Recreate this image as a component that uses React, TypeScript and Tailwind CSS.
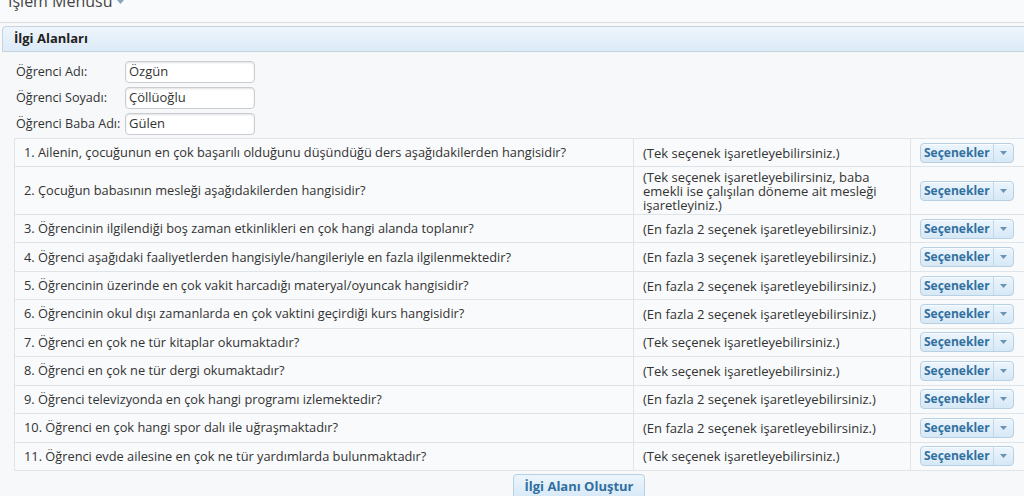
import React from "react";

const rows: { q: string; n: string[] }[] = [
  { q: "1. Ailenin, çocuğunun en çok başarılı olduğunu düşündüğü ders aşağıdakilerden hangisidir?", n: ["(Tek seçenek işaretleyebilirsiniz.)"] },
  { q: "2. Çocuğun babasının mesleği aşağıdakilerden hangisidir?", n: ["(Tek seçenek işaretleyebilirsiniz, baba", "emekli ise çalışılan döneme ait mesleği", "işaretleyiniz.)"] },
  { q: "3. Öğrencinin ilgilendiği boş zaman etkinlikleri en çok hangi alanda toplanır?", n: ["(En fazla 2 seçenek işaretleyebilirsiniz.)"] },
  { q: "4. Öğrenci aşağıdaki faaliyetlerden hangisiyle/hangileriyle en fazla ilgilenmektedir?", n: ["(En fazla 3 seçenek işaretleyebilirsiniz.)"] },
  { q: "5. Öğrencinin üzerinde en çok vakit harcadığı materyal/oyuncak hangisidir?", n: ["(En fazla 2 seçenek işaretleyebilirsiniz.)"] },
  { q: "6. Öğrencinin okul dışı zamanlarda en çok vaktini geçirdiği kurs hangisidir?", n: ["(En fazla 2 seçenek işaretleyebilirsiniz.)"] },
  { q: "7. Öğrenci en çok ne tür kitaplar okumaktadır?", n: ["(Tek seçenek işaretleyebilirsiniz.)"] },
  { q: "8. Öğrenci en çok ne tür dergi okumaktadır?", n: ["(Tek seçenek işaretleyebilirsiniz.)"] },
  { q: "9. Öğrenci televizyonda en çok hangi programı izlemektedir?", n: ["(En fazla 2 seçenek işaretleyebilirsiniz.)"] },
  { q: "10. Öğrenci en çok hangi spor dalı ile uğraşmaktadır?", n: ["(En fazla 2 seçenek işaretleyebilirsiniz.)"] },
  { q: "11. Öğrenci evde ailesine en çok ne tür yardımlarda bulunmaktadır?", n: ["(Tek seçenek işaretleyebilirsiniz.)"] },
];

function OptButton() {
  return (
    <div className="flex h-[20px] rounded-[4px] border border-[#b7d0e3] bg-gradient-to-b from-[#edf5fc] to-[#d6e8f6] text-[12px] font-bold text-[#30709f] shadow-[inset_0_1px_0_rgba(255,255,255,0.7)]">
      <div className="flex items-center px-[3px] leading-none">Seçenekler</div>
      <div className="flex w-[20px] items-center justify-center border-l border-[#c3d8e8]">
        <svg width="7" height="4" viewBox="0 0 7 4"><path d="M0 0h7L3.5 4z" fill="#6a94b6" /></svg>
      </div>
    </div>
  );
}

function Field({ label, value }: { label: string; value: string }) {
  return (
    <div className="flex h-[22px] items-center">
      <div className="w-[109px] text-[12.6px] text-[#333]">{label}</div>
      <div className="flex h-[22px] w-[130px] items-center rounded-[4px] border border-[#c9cdd1] bg-white px-[3px] text-[13px] text-[#333] shadow-[inset_0_1px_2px_rgba(0,0,0,0.12)]">
        {value}
      </div>
    </div>
  );
}

export default function App() {
  return (
    <div className="h-[496px] w-[1024px] overflow-hidden bg-[#f6f8fa]" style={{ fontFamily: '"Open Sans", "Noto Sans", sans-serif' }}>
      <div className="w-[1060px]">
        <div className="flex h-[23px] items-start border-b border-[#dadfe3] bg-[#f9fafb]">
          <div className="mt-[-10px] flex items-center pl-[8px] text-[16px] leading-[22px] text-[#444]">
            İşlem Menüsü
            <svg className="ml-[4px] mt-[2px]" width="7" height="4" viewBox="0 0 7 4"><path d="M0 0h7L3.5 4z" fill="#8aa6bd" /></svg>
          </div>
        </div>
        <div className="mt-[3px] ml-[2px] flex h-[26px] items-center rounded-tl-[4px] border border-[#c5d3dd] bg-gradient-to-b from-[#eef5fc] to-[#dcebf7] pl-[11px] text-[13px] font-bold text-[#222]">
          İlgi Alanları
        </div>
        <div className="flex flex-col gap-[4px] pl-[16px] pt-[9px]">
          <Field label="Öğrenci Adı:" value="Özgün" />
          <Field label="Öğrenci Soyadı:" value="Çöllüoğlu" />
          <Field label="Öğrenci Baba Adı:" value="Gülen" />
        </div>
        <div className="ml-[14px] mt-[3px] w-[1016px] border-t border-l border-[#dfe4e8] bg-[#f9fafb] text-[12.8px] text-[#333]">
          {rows.map((r, i) => (
            <div
              key={i}
              className={`flex border-b border-[#dfe4e8] ${i === 0 ? "h-[28px]" : i === 1 ? "h-[48px]" : "h-[28.45px]"}`}
            >
              <div className="flex w-[619px] items-center border-r border-[#dfe4e8] pl-[9px]">{r.q}</div>
              <div className="flex w-[277px] flex-col justify-center border-r border-[#dfe4e8] pl-[9px] text-[13px] leading-[14px]">
                {r.n.map((t, j) => (
                  <div key={j}>{t}</div>
                ))}
              </div>
              <div className="flex items-center pl-[9px]">
                <OptButton />
              </div>
            </div>
          ))}
        </div>
        <div className="ml-[513px] mt-[3px] flex h-[26px] w-[132px] items-center justify-center rounded-[4px] border border-[#b7d0e3] bg-gradient-to-b from-[#edf5fc] to-[#d6e8f6] text-[13px] font-bold text-[#30709f]">
          İlgi Alanı Oluştur
        </div>
      </div>
    </div>
  );
}
